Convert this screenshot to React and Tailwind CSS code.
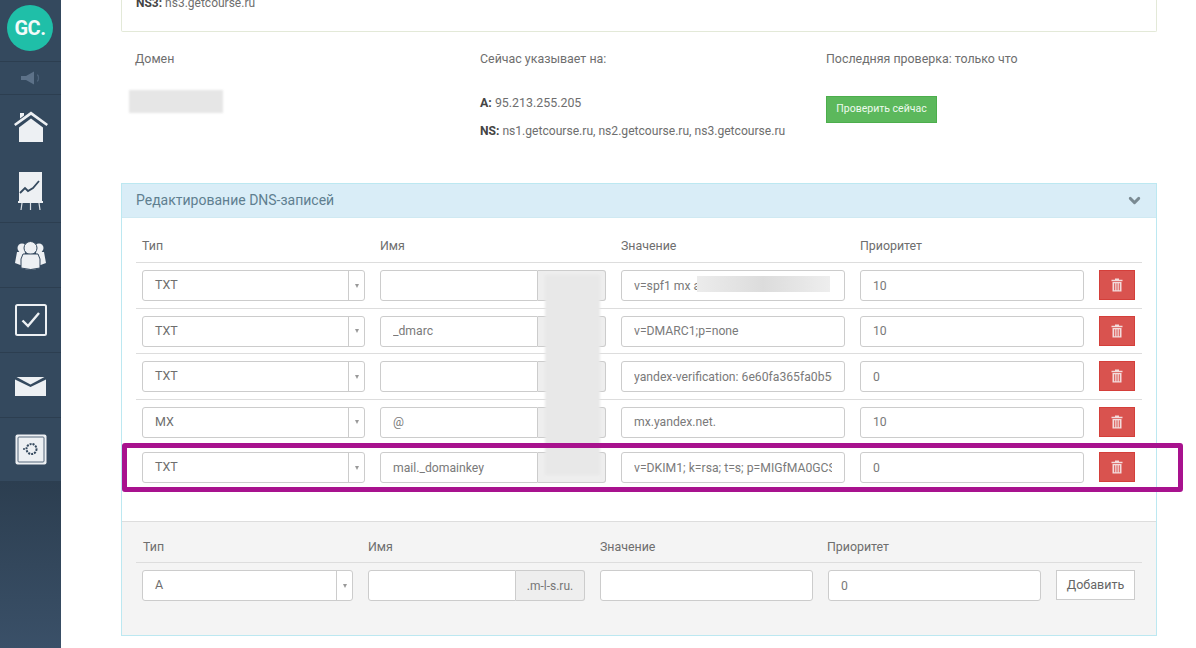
import { ChevronDown } from "lucide-react";

const rows = [
  { type: "TXT", name: "", value: "v=spf1 mx a", priority: "10" },
  { type: "TXT", name: "_dmarc", value: "v=DMARC1;p=none", priority: "10" },
  { type: "TXT", name: "", value: "yandex-verification: 6e60fa365fa0b5e1", priority: "0" },
  { type: "MX", name: "@", value: "mx.yandex.net.", priority: "10" },
  { type: "TXT", name: "mail._domainkey", value: "v=DKIM1; k=rsa; t=s; p=MIGfMA0GCSqGSIb3", priority: "0" },
];

const fieldClass =
  "h-[31px] rounded-[3px] border border-[#ccc] bg-white px-3 text-[12.2px] text-[#7a7a7a] outline-none";

const TypeSelect = ({ value, className }) => (
  <div className={`flex h-[31px] items-center rounded-[3px] border border-[#ccc] bg-white ${className}`}>
    <span className="flex-1 pl-3 text-[12.5px] text-[#6e6e6e]">{value}</span>
    <span className="flex h-full w-[16px] items-center justify-center border-l border-[#ccc]">
      <span className="h-0 w-0 border-x-[2.5px] border-t-[4px] border-x-transparent border-t-[#999]" />
    </span>
  </div>
);

const TrashIcon = () => (
  <svg width="12" height="14" viewBox="0 0 12 14" fill="#f3dcdc">
    <path d="M4 0.5h4v1.2h3.5v1.6H0.5V1.7H4z" />
    <path d="M1.5 4h9v9.5h-9zM3.2 5.2v7h1v-7zM5.5 5.2v7h1v-7zM7.8 5.2v7h1v-7z" fillRule="evenodd" />
  </svg>
);

const Sidebar = () => (
  <aside className="flex h-full w-[61px] shrink-0 flex-col bg-[#34495e]">
    <div className="flex h-[62px] items-center justify-center border-b border-[#2c3e50] pb-[5px] pr-[1px]">
      <div className="flex h-[46px] w-[46px] items-center justify-center rounded-full bg-[#1fbfa8] text-[20px] font-bold tracking-tight text-[#f2fbfa]">
        GC.
      </div>
    </div>
    <div className="flex h-[33px] items-center justify-center border-b border-[#2c3e50]">
      <svg width="22" height="14" viewBox="0 0 22 14" fill="#5d7289">
        <path d="M1 5h5l8-4.5v13L6 9H1z" />
        <path d="M17 4c2 0 2 6 0 6" fill="none" stroke="#4c6279" strokeWidth="1.3" />
      </svg>
    </div>
    <div className="flex h-[65px] items-center justify-center pb-[2px]">
      <svg width="34" height="32" viewBox="0 0 34 32" fill="#edf0f3">
        <path d="M6 2h4v2.5L6 7.5z" />
        <path d="M17 0.5L34 13l-1.5 2L17 4 1.5 15 0 13z" />
        <path d="M5 16.5L17 7.5l12 9V31H5z" />
      </svg>
    </div>
    <div className="flex h-[63px] items-center justify-center border-b border-[#2c3e50] pb-[2px] pt-[2px]">
      <svg width="25" height="38" viewBox="0 0 25 38" fill="none">
        <rect x="1" y="0" width="23" height="29" fill="#edf0f3" />
        <path d="M2 21l5-5 3 3 5-3 6-7" stroke="#34495e" strokeWidth="1.8" />
        <rect x="0" y="29" width="25" height="2" fill="#edf0f3" />
        <path d="M4 31l-1 7M12.5 31v7M21 31l1 7" stroke="#d7dde3" strokeWidth="1.2" />
      </svg>
    </div>
    <div className="flex h-[65px] items-center justify-center border-b border-[#2c3e50]">
      <svg width="33" height="29" viewBox="0 0 33 29" fill="#edf0f3">
        <circle cx="8" cy="7" r="4.5" />
        <circle cx="25" cy="7" r="4.5" />
        <path d="M3 11h8l-2 14-8-3zM30 11h-8l2 14 8-3z" />
        <circle cx="16.5" cy="7" r="6.5" stroke="#34495e" />
        <path d="M9 13h15l2 5v9q-9 3-19 0v-9z" stroke="#34495e" />
      </svg>
    </div>
    <div className="flex h-[65px] items-center justify-center border-b border-[#2c3e50]">
      <svg width="32" height="32" viewBox="0 0 32 32" fill="none">
        <rect x="1" y="1" width="30" height="30" rx="1.5" stroke="#edf0f3" strokeWidth="2" />
        <path d="M7.5 16.5l5.5 5.5 11-13" stroke="#edf0f3" strokeWidth="2.4" />
      </svg>
    </div>
    <div className="flex h-[65px] items-center justify-center border-b border-[#2c3e50] pt-[2px]">
      <svg width="31" height="19" viewBox="0 0 31 19" fill="#edf0f3">
        <path d="M0 2.5l15.5 7.5 15.5-7.5V19H0z" />
        <path d="M1.5 0h28L15.5 7.5z" />
      </svg>
    </div>
    <div className="flex h-[63px] items-center justify-center">
      <svg width="32" height="32" viewBox="0 0 32 32" fill="none">
        <rect x="0.5" y="0.5" width="31" height="30" rx="2" fill="#edf0f3" />
        <rect x="3" y="3" width="26" height="25" rx="1" stroke="#56697d" strokeWidth="1" />
        <circle cx="16.5" cy="15" r="5" stroke="#34495e" strokeWidth="2" strokeDasharray="2 1" />
        <circle cx="9" cy="15" r="1" fill="#34495e" />
      </svg>
    </div>
    <div className="flex-1 bg-gradient-to-b from-[#2c3e50] to-[#3a5068]" />
  </aside>
);

const App = () => {
  return (
    <div className="relative flex h-[648px] overflow-hidden bg-white font-['Roboto',sans-serif] text-[12.4px] text-[#6e6e6e]">
      <Sidebar />

      <main className="ml-[60px] w-[1036px]">
        <div className="h-[32px] overflow-hidden rounded-b-[2px] border-x border-b border-[#e3e9d8] pl-[14px]">
          <p className="-mt-[6px] text-[12px]">
            <b className="text-[#444]">NS3:</b> ns3.getcourse.ru
          </p>
        </div>

        {/* Domain info */}
        <div className="grid h-[151px] grid-cols-[345px_346px_1fr] pl-[14px] pt-[18px]">
          <div>
            <p>Домен</p>
            <div className="-ml-[6px] mt-[21px] h-[23px] w-[94px] bg-[#e6e6e6] blur-[1px]" />
          </div>
          <div>
            <p>Сейчас указывает на:</p>
            <p className="mt-[25px]">
              <b className="text-[#444]">A:</b> 95.213.255.205
            </p>
            <p className="mt-[10px] text-[12.1px]">
              <b className="text-[#444]">NS:</b> ns1.getcourse.ru, ns2.getcourse.ru, ns3.getcourse.ru
            </p>
          </div>
          <div>
            <p>Последняя проверка: только что</p>
            <button className="mt-[27px] h-[27px] w-[111px] border border-[#4cae4c] bg-[#5cb85c] text-[10.5px] text-[#eefaee]">
              Проверить сейчас
            </button>
          </div>
        </div>

        {/* DNS panel */}
        <section className="h-[453px] border border-[#bce8f1]">
          <div className="flex h-[34px] items-center justify-between border-b border-[#cfe9f2] bg-[#d9edf7] pl-[14px] pr-[13px] text-[14px] text-[#5f7f90]">
            <span>Редактирование DNS-записей</span>
            <ChevronDown size={17} strokeWidth={4} className="text-[#7a8a92]" />
          </div>

          <div className="h-[303px] px-[14px] pt-[19px]">
            <div className="flex h-[26px] border-b border-[#ddd]">
              <span className="w-[238px] pl-[6px]">Тип</span>
              <span className="w-[241px] pl-[6px]">Имя</span>
              <span className="w-[239px] pl-[6px]">Значение</span>
              <span className="pl-[6px]">Приоритет</span>
            </div>
            {rows.map((row, i) => (
              <div key={i} className="flex h-[45.5px] items-start border-b border-[#ddd] pl-[6px] pt-[7px] last:border-b-0">
                <TypeSelect value={row.type} className="w-[223px]" />
                <div className="ml-[15px] flex w-[226px]">
                  <input
                    readOnly
                    value={row.name}
                    className={`${fieldClass} w-[158px] rounded-r-none`}
                  />
                  <span className="h-[31px] flex-1 rounded-r-[3px] border border-l-0 border-[#ccc] bg-[#eee]" />
                </div>
                <input readOnly value={row.value} className={`${fieldClass} ml-[15px] w-[224px]`} />
                <input readOnly value={row.priority} className={`${fieldClass} ml-[15px] w-[224px]`} />
                <button className="ml-[15px] flex h-[30px] w-[36px] items-center justify-center border border-[#d43f3a] bg-[#d9534f]">
                  <TrashIcon />
                </button>
              </div>
            ))}
          </div>

          {/* Add record */}
          <div className="h-[114px] border-t border-[#ddd] bg-[#f4f4f4] px-[14px] pt-[16px]">
            <div className="flex h-[25px] border-b border-[#ddd]">
              <span className="w-[225px] pl-[7px]">Тип</span>
              <span className="w-[232px] pl-[7px]">Имя</span>
              <span className="w-[228px] pl-[7px]">Значение</span>
              <span className="pl-[6px]">Приоритет</span>
            </div>
            <div className="flex items-start pl-[6px] pt-[7px]">
              <TypeSelect value="A" className="w-[211px]" />
              <div className="ml-[15px] flex w-[217px]">
                <input readOnly className={`${fieldClass} w-[148px] rounded-r-none`} />
                <span className="flex h-[31px] flex-1 items-center justify-center rounded-r-[3px] border border-l-0 border-[#ccc] bg-[#eee] text-[12px] text-[#777]">
                  .m-l-s.ru.
                </span>
              </div>
              <input readOnly className={`${fieldClass} ml-[15px] w-[213px]`} />
              <input readOnly value="0" className={`${fieldClass} ml-[15px] w-[213px]`} />
              <button className="ml-[15px] h-[30px] w-[79px] border border-[#ccc] bg-white text-[12.5px] text-[#666]">
                Добавить
              </button>
            </div>
          </div>
        </section>
      </main>

      {/* Redaction patches over the screenshot */}
      <div className="absolute left-[545px] top-[275px] h-[200px] w-[55px] bg-[#e8e8e8] blur-[1px]" />
      <div className="absolute left-[697px] top-[276px] h-[16px] w-[133px] bg-gradient-to-r from-[#ececec] via-[#dcdcdc] to-[#eeeeee] blur-[0.5px]" />

      {/* Highlight frame */}
      <div className="absolute left-[122px] top-[443px] h-[49px] w-[1061px] rounded-[3px] border-[5px] border-[#a8128e]" />
    </div>
  );
};

export default App;
